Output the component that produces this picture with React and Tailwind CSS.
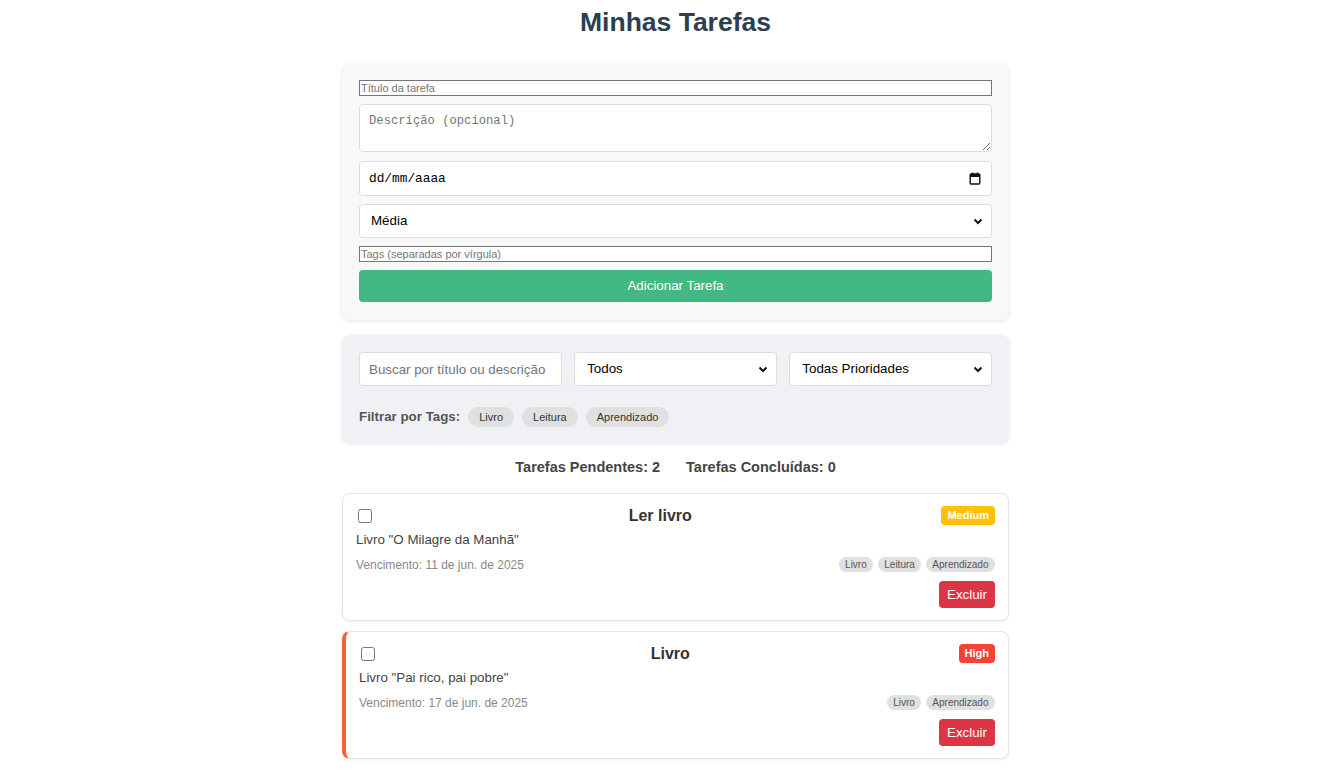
import React from 'react';

const tasks = [
  {
    id: 1,
    title: 'Ler livro',
    description: 'Livro "O Milagre da Manhã"',
    due: '11 de jun. de 2025',
    priority: 'Medium',
    tags: ['Livro', 'Leitura', 'Aprendizado'],
  },
  {
    id: 2,
    title: 'Livro',
    description: 'Livro "Pai rico, pai pobre"',
    due: '17 de jun. de 2025',
    priority: 'High',
    tags: ['Livro', 'Aprendizado'],
  },
];

function Chevron() {
  return (
    <svg width="10" height="7" viewBox="0 0 10 7" aria-hidden="true">
      <path d="M1.5 1.5l3.5 3.5 3.5-3.5" fill="none" stroke="#111" strokeWidth="2" />
    </svg>
  );
}

function CalendarIcon() {
  return (
    <svg width="12" height="13" viewBox="0 0 12 13" aria-hidden="true">
      <path d="M3.5 0.5v2M8.5 0.5v2" stroke="#111" strokeWidth="1.4" />
      <rect x="1.2" y="2" width="9.6" height="10" rx="1" fill="none" stroke="#111" strokeWidth="1.4" />
      <rect x="1.2" y="2" width="9.6" height="3" fill="#111" />
    </svg>
  );
}

function FakeSelect({ label, textPad }) {
  return (
    <div className={`h-[34px] flex items-center justify-between rounded border border-[#ddd] bg-white pr-[8px] text-[13.33px] text-black ${textPad}`}>
      <span>{label}</span>
      <Chevron />
    </div>
  );
}

function TaskCard({ task }) {
  const high = task.priority === 'High';
  return (
    <div
      className={
        high
          ? 'bg-white rounded-lg border border-[#e6e6e6] border-l-4 border-l-[#f4623a] shadow-[0_1px_3px_rgba(0,0,0,0.07)] py-[12px] pl-[13px] pr-[13px]'
          : 'bg-white rounded-lg border border-[#e6e6e6] shadow-[0_1px_3px_rgba(0,0,0,0.07)] py-[12px] pl-[13px] pr-[13px]'
      }
    >
      {/* header */}
      <div className="flex items-center h-[19px]">
        <input type="checkbox" className="w-[14px] h-[14px] ml-[2px]" />
        <h3 className="flex-1 pl-[7px] text-center text-[16px] font-bold text-[#333]">{task.title}</h3>
        <span
          className={
            high
              ? 'h-[19px] px-[6px] flex items-center rounded-[4px] bg-[#f44336] text-white text-[11px] font-bold'
              : 'h-[19px] px-[6px] flex items-center rounded-[4px] bg-[#ffc107] text-white text-[11px] font-bold'
          }
        >
          {task.priority}
        </span>
      </div>

      <p className="mt-[7px] text-[13.33px] leading-[16px] text-[#444]">{task.description}</p>

      <div className="mt-[9px] h-[15px] flex items-center justify-between">
        <span className="text-[12px] text-[#888]">Vencimento: {task.due}</span>
        <div className="flex gap-[4.5px]">
          {task.tags.map((tag) => (
            <span key={tag} className="h-[15px] px-[6.5px] flex items-center rounded-full bg-[#e0e0e0] text-[10px] text-[#555]">
              {tag}
            </span>
          ))}
        </div>
      </div>

      <div className="mt-[9px] flex justify-end">
        <button className="h-[27px] px-[8px] rounded bg-[#dc3545] text-white text-[13.33px]">Excluir</button>
      </div>
    </div>
  );
}

export default function App() {
  return (
    <div className="min-h-screen bg-white pl-[21px] pt-[7px] font-['Liberation_Sans',Arial,sans-serif]">
      <div className="w-[667px] mx-auto pb-[14px]">
        <h1 className="text-center text-[26.5px] leading-[30px] font-bold text-[#2c3e50] mb-[27px]">Minhas Tarefas</h1>

        {/* Form */}
        <div className="bg-[#f8f8f8] rounded-lg shadow-[0_1px_4px_rgba(0,0,0,0.1)] px-[17px] pt-[16px] pb-[18px] flex flex-col gap-[8px]">
          <input
            placeholder="Título da tarefa"
            className="h-[16px] border border-[#767676] bg-white px-[1px] text-[11px] leading-[14px] placeholder:text-[#757575] outline-none"
          />
          <textarea
            placeholder="Descrição (opcional)"
            className="h-[48px] rounded border border-[#ddd] bg-white p-[9px] font-['Liberation_Mono',monospace] text-[12.2px] leading-[15px] placeholder:text-[#757575] outline-none"
          />
          <div className="h-[35px] mt-[1px] flex items-center justify-between rounded border border-[#ddd] bg-white pl-[9px] pr-[10px]">
            <span className="font-['Liberation_Mono',monospace] text-[12.8px] text-black">dd/mm/aaaa</span>
            <CalendarIcon />
          </div>
          <FakeSelect label="Média" textPad="pl-[11px]" />
          <input
            placeholder="Tags (separadas por vírgula)"
            className="h-[16px] border border-[#767676] bg-white px-[1px] text-[11px] leading-[14px] placeholder:text-[#757575] outline-none"
          />
          <button className="h-[32px] rounded bg-[#42b983] text-white text-[13.33px]">Adicionar Tarefa</button>
        </div>

        {/* Filters */}
        <div className="mt-[15px] bg-[#f0f1f4] rounded-lg shadow-[0_1px_4px_rgba(0,0,0,0.1)] px-[17px] pt-[17px] pb-[16px]">
          <div className="grid grid-cols-3 gap-[12.5px]">
            <input
              placeholder="Buscar por título ou descrição"
              className="w-full min-w-0 h-[34px] rounded border border-[#ddd] bg-white px-[9px] text-[13.33px] placeholder:text-[#757575] outline-none"
            />
            <FakeSelect label="Todos" textPad="pl-[12px]" />
            <FakeSelect label="Todas Prioridades" textPad="pl-[12px]" />
          </div>
          <div className="mt-[21px] flex items-center gap-[8px]">
            <span className="text-[13.33px] font-bold text-[#555]">Filtrar por Tags:</span>
            {['Livro', 'Leitura', 'Aprendizado'].map((tag) => (
              <span key={tag} className="h-[20px] px-[11px] flex items-center rounded-full bg-[#e0e0e0] text-[11px] text-[#333]">
                {tag}
              </span>
            ))}
          </div>
        </div>

        {/* Stats */}
        <div className="mt-[16px] flex justify-center gap-[26px] text-[14.5px] leading-[17px] font-bold text-[#444]">
          <span>Tarefas Pendentes: 2</span>
          <span>Tarefas Concluídas: 0</span>
        </div>

        {/* Tasks */}
        <div className="mt-[17px] flex flex-col gap-[10px]">
          {tasks.map((task) => (
            <TaskCard key={task.id} task={task} />
          ))}
        </div>
      </div>
    </div>
  );
}
